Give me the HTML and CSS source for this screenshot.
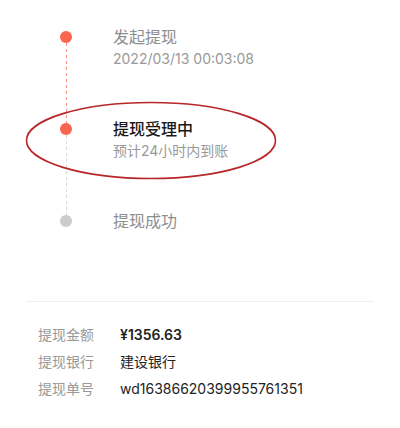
FILE: index.html
```html
<!DOCTYPE html>
<html lang="zh-CN">
<head>
<meta charset="utf-8">
<link rel="stylesheet" href="styles.css">
</head>
<body>
<div class="page">
  <div class="timeline">
    <div class="step step-done">
      <div class="rail"><span class="dot dot-active"></span><span class="line line-active"></span></div>
      <div class="step-text">
        <div class="title">发起提现</div>
        <div class="sub">2022/03/13 00:03:08</div>
      </div>
    </div>
    <div class="step step-current">
      <div class="rail"><span class="dot dot-active"></span><span class="line line-idle"></span></div>
      <div class="step-text">
        <div class="title title-current">提现受理中</div>
        <div class="sub">预计24小时内到账</div>
      </div>
    </div>
    <div class="step step-last">
      <div class="rail"><span class="dot dot-idle"></span></div>
      <div class="step-text">
        <div class="title">提现成功</div>
      </div>
    </div>
  </div>
  <div class="info">
    <div class="row"><span class="label">提现金额</span><span class="value value-strong">¥1356.63</span></div>
    <div class="row"><span class="label">提现银行</span><span class="value">建设银行</span></div>
    <div class="row"><span class="label">提现单号</span><span class="value">wd16386620399955761351</span></div>
  </div>
  <svg class="mark" width="252" height="80" viewBox="0 0 252 80"><ellipse cx="126" cy="39.5" rx="124.5" ry="38" fill="none" stroke="#b8262a" stroke-width="1.6"/></svg>
</div>
</body>
</html>
```
FILE: styles.css
```css
html, body {
  margin: 0;
  padding: 0;
  background: #fff;
}
body {
  font-family: "Inter", "Noto Sans CJK SC", sans-serif;
  color: #222;
}
.page {
  position: relative;
  width: 400px;
  height: 428px;
  overflow: hidden;
}
.timeline {
  padding: 31px 0 0 60px;
}
.step {
  display: flex;
  gap: 41px;
}
.step-done, .step-current {
  min-height: 92px;
}
.rail {
  width: 12px;
  display: flex;
  flex-direction: column;
  align-items: center;
}
.dot {
  width: 12px;
  height: 12px;
  border-radius: 50%;
  flex: none;
}
.dot-active { background: #f9654f; }
.dot-idle { background: #cccccc; }
.line {
  flex: 1;
  width: 1px;
}
.line-active {
  background: repeating-linear-gradient(to bottom, #f7907f 0 3px, transparent 3px 6px);
}
.line-idle {
  background: repeating-linear-gradient(to bottom, #d8d8d8 0 3px, transparent 3px 6px);
}
.step-text {
  margin-top: -5px;
}
.title {
  font-size: 16px;
  line-height: 22px;
  color: #8e8e8e;
}
.title-current {
  color: #1a1a1a;
  font-weight: 500;
}
.sub {
  font-size: 14px;
  line-height: 22px;
  color: #999;
}
.info {
  margin: 69px 26px 0;
  border-top: 1px solid #eeeeee;
  padding: 19px 0 0 12px;
}
.row {
  display: grid;
  grid-template-columns: 82px 1fr;
  font-size: 14px;
  line-height: 27px;
}
.label { color: #999; }
.value { color: #222; }
.value-strong { font-weight: 600; }
.mark {
  position: absolute;
  left: 25px;
  top: 101px;
}
```
